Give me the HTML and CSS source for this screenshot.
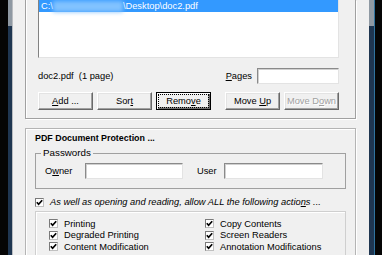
FILE: index.html
```html
<!DOCTYPE html>
<html lang="en">
<head>
  <meta charset="UTF-8" />
  <title>PDF Protection</title>
  <link rel="stylesheet" href="styles.css">
</head>
<body>
  <div class="frame frame-left">
    <div class="edge"></div>
    <div class="bar"></div>
    <div class="rim"></div>
  </div>

  <div class="window">
    <div class="group files">
      <div class="listbox">
        <div class="item selected">C:\<span class="redact"></span>\Desktop\doc2.pdf</div>
      </div>

      <div class="file-info">
        <span>doc2.pdf&nbsp; (1 page)</span>
        <label class="pages"><span><u>P</u>ages</span><input type="text"></label>
      </div>

      <div class="buttons">
        <button><u>A</u>dd ...</button>
        <button>Sor<u>t</u></button>
        <button class="default">Remo<u>v</u>e</button>
        <button class="push">Move <u>U</u>p</button>
        <button disabled>Move D<u>o</u>wn</button>
      </div>
    </div>

    <div class="group protection">
      <div class="title">PDF Document Protection ...</div>

      <fieldset class="passwords">
        <legend>Passwords</legend>
        <label class="owner"><span>O<u>w</u>ner</span><input type="password"></label>
        <label class="user"><span>User</span><input type="password"></label>
      </fieldset>

      <div class="check-row allow">
        <span class="check"><svg viewBox="0 0 7 7" width="7" height="7"><polyline points="0.8,3.2 2.6,5.2 6.2,1.2" /></svg></span>
        <em>As well as opening and reading, allow ALL the following actio<u>n</u>s ...</em>
      </div>

      <div class="actions">
        <div class="check-row"><span class="check"><svg viewBox="0 0 7 7" width="7" height="7"><polyline points="0.8,3.2 2.6,5.2 6.2,1.2" /></svg></span>Printing</div>
        <div class="check-row"><span class="check"><svg viewBox="0 0 7 7" width="7" height="7"><polyline points="0.8,3.2 2.6,5.2 6.2,1.2" /></svg></span>Copy Contents</div>
        <div class="check-row"><span class="check"><svg viewBox="0 0 7 7" width="7" height="7"><polyline points="0.8,3.2 2.6,5.2 6.2,1.2" /></svg></span>Degraded Printing</div>
        <div class="check-row"><span class="check"><svg viewBox="0 0 7 7" width="7" height="7"><polyline points="0.8,3.2 2.6,5.2 6.2,1.2" /></svg></span>Screen Readers</div>
        <div class="check-row"><span class="check"><svg viewBox="0 0 7 7" width="7" height="7"><polyline points="0.8,3.2 2.6,5.2 6.2,1.2" /></svg></span>Content Modification</div>
        <div class="check-row"><span class="check"><svg viewBox="0 0 7 7" width="7" height="7"><polyline points="0.8,3.2 2.6,5.2 6.2,1.2" /></svg></span>Annotation Modifications</div>
      </div>
    </div>
  </div>

  <div class="frame frame-right">
    <div class="bar"></div>
    <div class="glow"></div>
    <div class="edge"></div>
  </div>
</body>
</html>
```

FILE: styles.css
```css
* {
  box-sizing: border-box;
}

html, body {
  margin: 0;
  padding: 0;
}

body {
  width: 382px;
  height: 255px;
  overflow: hidden;
  display: flex;
  background: #000;
  font-family: "Liberation Sans", Arial, sans-serif;
  font-size: 9.3px;
  color: #000;
}

/* desktop / neighbouring window edges */
.frame {
  display: flex;
  height: 100%;
  flex-shrink: 0;
}

.frame .edge {
  width: 8px;
  background: #050505;
}

.frame .bar {
  width: 4px;
  background: linear-gradient(#8f99a3 0 26px, #1f3651 26px);
}

.frame-left .rim {
  width: 1px;
  background: #b9bcc0;
}

.frame-right .bar {
  width: 5px;
}

.frame-right .glow {
  width: 1px;
  background: #2f739f;
}

/* dialog */
.window {
  flex: 1;
  background: #f0f0f0;
  padding: 0 13px 0 12px;
}

.group {
  border: 1px solid #a0a0a0;
  box-shadow: 1px 1px 0 #fff, inset 1px 1px 0 #fff;
}

.files {
  border-top: none;
  box-shadow: 1px 1px 0 #fff, inset 1px 0 0 #fff;
  padding: 0 16px 8px 12px;
}

.listbox {
  height: 58px;
  background: #fff;
  border: 1px solid;
  border-top: none;
  border-color: #828282 #e3e3e3 #e3e3e3 #828282;
}

.item {
  height: 12px;
  line-height: 12px;
  padding-left: 2px;
  white-space: nowrap;
}

.item.selected {
  background: #3399ff;
  color: #fff;
}

.redact {
  display: inline-block;
  width: 70px;
  height: 11px;
  vertical-align: middle;
  background: #82c2ff;
  filter: blur(2px);
}

.file-info {
  display: flex;
  justify-content: space-between;
  align-items: center;
  height: 17px;
  margin-top: 9px;
}

.pages {
  display: flex;
  align-items: center;
  gap: 5px;
}

input {
  height: 16px;
  background: #fff;
  border: 1px solid;
  border-color: #8a8a8a #e3e3e3 #e3e3e3 #8a8a8a;
  box-shadow: inset 1px 1px 0 #d0d0d0;
  padding: 0 2px;
  font: inherit;
}

.pages input {
  width: 82px;
}

.buttons {
  display: flex;
  gap: 4px;
  margin-top: 8px;
}

button {
  flex-shrink: 0;
  width: 55px;
  height: 18px;
  padding: 0 0 1px;
  font: inherit;
  color: #000;
  background: #f0f0f0;
  border: 1px solid;
  border-color: #fff #696969 #696969 #fff;
  box-shadow: inset -1px -1px 0 #a0a0a0, inset 1px 1px 0 #e3e3e3;
}

button.default {
  border-color: #000;
  box-shadow: inset 1px 1px 0 #fff, inset -1px -1px 0 #696969, inset -2px -2px 0 #a0a0a0;
  outline: 1px dotted #000;
  outline-offset: -3px;
}

button.push {
  margin-left: 10px;
}

button:disabled {
  color: #a0a0a0;
  text-shadow: 1px 1px 0 #fff;
}

/* protection panel */
.protection {
  margin-top: 9px;
  height: 200px;
  border-color: #b4b4b4;
  padding: 4px 9px 0 9px;
}

.title {
  font-weight: bold;
  font-size: 8.9px;
  line-height: 11px;
}

.passwords {
  display: flex;
  align-items: center;
  margin: 3px 0 0;
  padding: 0 9px 9px;
  min-width: 0;
  border: 1px solid #a0a0a0;
}

.passwords legend {
  padding: 0 2px;
  margin-left: -4px;
  line-height: 12px;
  font-size: 9.8px;
}

.passwords label {
  display: flex;
  align-items: center;
  margin-top: 4px;
}

.owner span {
  width: 40px;
}

.owner input {
  width: 98px;
}

.user {
  margin-left: 14px;
}

.user span {
  width: 27px;
}

.user input {
  width: 99px;
}

.check-row {
  display: flex;
  align-items: center;
  gap: 6px;
  height: 11.5px;
  white-space: nowrap;
}

.allow {
  height: 12px;
  margin-top: 7px;
}

.check {
  display: flex;
  align-items: center;
  justify-content: center;
  flex-shrink: 0;
  width: 9px;
  height: 9px;
  background: #fff;
  border: 1px solid;
  border-color: #7a7a7a #c0c0c0 #c0c0c0 #7a7a7a;
}

.check svg {
  fill: none;
  stroke: #000;
  stroke-width: 1.7;
}

.actions {
  display: grid;
  grid-template-columns: 156px auto;
  grid-auto-rows: 11.5px;
  margin-top: 3px;
  height: 80px;
  padding: 6px 0 0 13px;
  border: 1px solid #cfcfcf;
  box-shadow: inset 1px 1px 0 #fff;
}
```
